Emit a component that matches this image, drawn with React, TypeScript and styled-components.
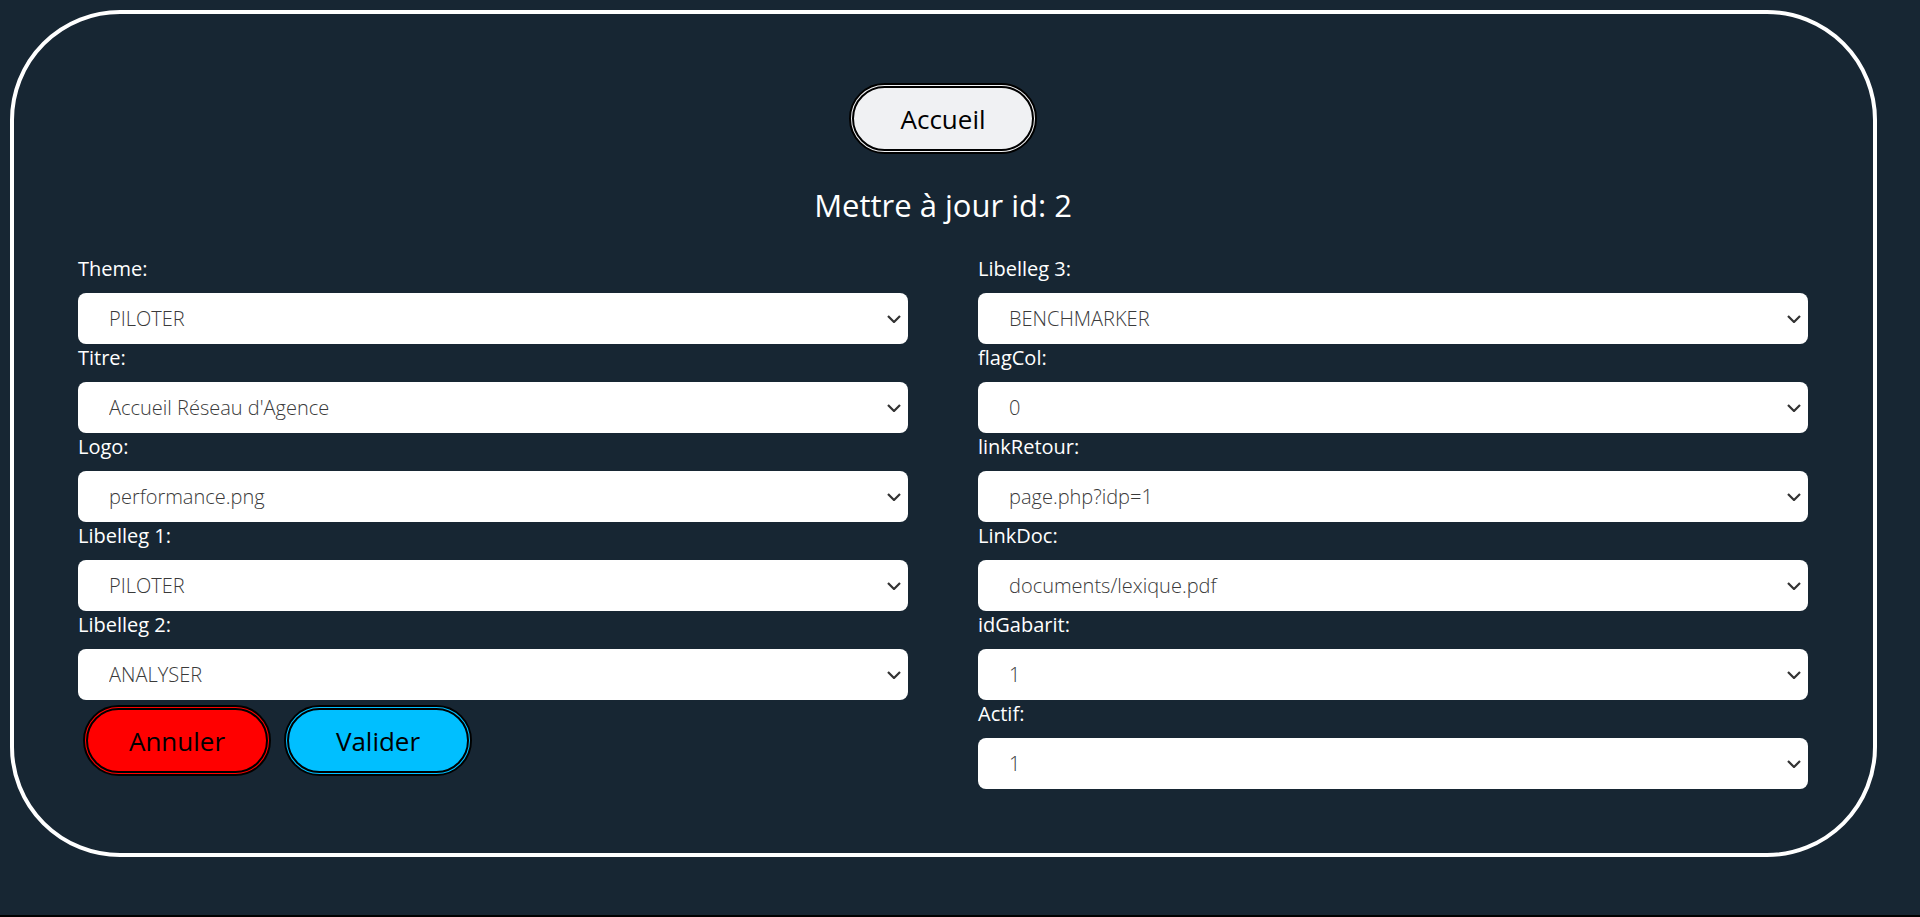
import React from 'react';
import styled, { createGlobalStyle } from 'styled-components';

const GlobalStyle = createGlobalStyle`
  html {
    background: #000;
  }
  body {
    margin: 0;
    font-family: "Open Sans", "Liberation Sans", sans-serif;
  }
`;

const leftFields = [
  { label: 'Theme:', value: 'PILOTER' },
  { label: 'Titre:', value: "Accueil Réseau d'Agence" },
  { label: 'Logo:', value: 'performance.png' },
  { label: 'Libelleg 1:', value: 'PILOTER' },
  { label: 'Libelleg 2:', value: 'ANALYSER' },
];

const rightFields = [
  { label: 'Libelleg 3:', value: 'BENCHMARKER' },
  { label: 'flagCol:', value: '0' },
  { label: 'linkRetour:', value: 'page.php?idp=1' },
  { label: 'LinkDoc:', value: 'documents/lexique.pdf' },
  { label: 'idGabarit:', value: '1' },
  { label: 'Actif:', value: '1' },
];

function Field({ label, value }: { label: string; value: string }) {
  return (
    <FieldBox>
      <Label>{label}</Label>
      <SelectWrap>
        <Select defaultValue={value}>
          <option value={value}>{value}</option>
        </Select>
        <Chevron viewBox="0 0 14 8" aria-hidden="true">
          <path d="M1 1l6 6 6-6" />
        </Chevron>
      </SelectWrap>
    </FieldBox>
  );
}

export default function App() {
  return (
    <Wrapper>
      <GlobalStyle />
      <Card>
        <Top>
          <Button $bg="#f0f1f3">Accueil</Button>
        </Top>
        <Title>Mettre à jour id: 2</Title>
        <Form>
          <Column>
            {leftFields.map((f) => (
              <Field key={f.label} {...f} />
            ))}
            <Actions>
              <Button $bg="#ff0000">Annuler</Button>
              <Button $bg="#00bfff">Valider</Button>
            </Actions>
          </Column>
          <Column>
            {rightFields.map((f) => (
              <Field key={f.label} {...f} />
            ))}
          </Column>
        </Form>
      </Card>
    </Wrapper>
  );
}

const Wrapper = styled.div`
  min-height: 915px;
  box-sizing: border-box;
  padding: 10px 43px 0 10px;
  background: #172633;
`;

const Card = styled.div`
  box-sizing: border-box;
  height: 847px;
  border: 4px solid #fff;
  border-radius: 110px;
  padding: 69px 65px 0 64px;
`;

const Top = styled.div`
  display: flex;
  justify-content: center;
`;

const Button = styled.button<{ $bg: string }>`
  box-sizing: border-box;
  width: 188px;
  height: 71px;
  border: 5px double #000;
  border-radius: 40px;
  background: ${(p) => p.$bg};
  color: #000;
  font-family: "Open Sans", "Liberation Sans", sans-serif;
  font-size: 26px;
  cursor: pointer;
`;

const Title = styled.h2`
  margin: 0;
  height: 101px;
  display: flex;
  align-items: center;
  justify-content: center;
  color: #fff;
  font-size: 31px;
  font-weight: 400;
`;

const Form = styled.div`
  display: grid;
  grid-template-columns: 1fr 1fr;
  column-gap: 70px;
`;

const Column = styled.div`
  display: flex;
  flex-direction: column;
`;

const FieldBox = styled.div`
  display: flex;
  flex-direction: column;
`;

const Label = styled.label`
  color: #fff;
  font-size: 20px;
  line-height: 28px;
  padding-bottom: 10px;
`;

const SelectWrap = styled.div`
  position: relative;
  display: flex;
`;

const Select = styled.select`
  flex: 1;
  height: 51px;
  border: none;
  border-radius: 8px;
  background: #fff;
  padding: 0 40px 0 31px;
  color: #3a3a3a;
  font-family: "Open Sans", "Liberation Sans", sans-serif;
  font-size: 20px;
  font-weight: 300;
  outline: none;
  appearance: none;
`;

const Chevron = styled.svg`
  position: absolute;
  right: 7px;
  top: 50%;
  width: 14px;
  height: 8px;
  margin-top: -4px;
  fill: none;
  stroke: #333;
  stroke-width: 2.2;
  pointer-events: none;
`;

const Actions = styled.div`
  display: flex;
  gap: 13px;
  padding: 5px 0 0 5px;
`;
